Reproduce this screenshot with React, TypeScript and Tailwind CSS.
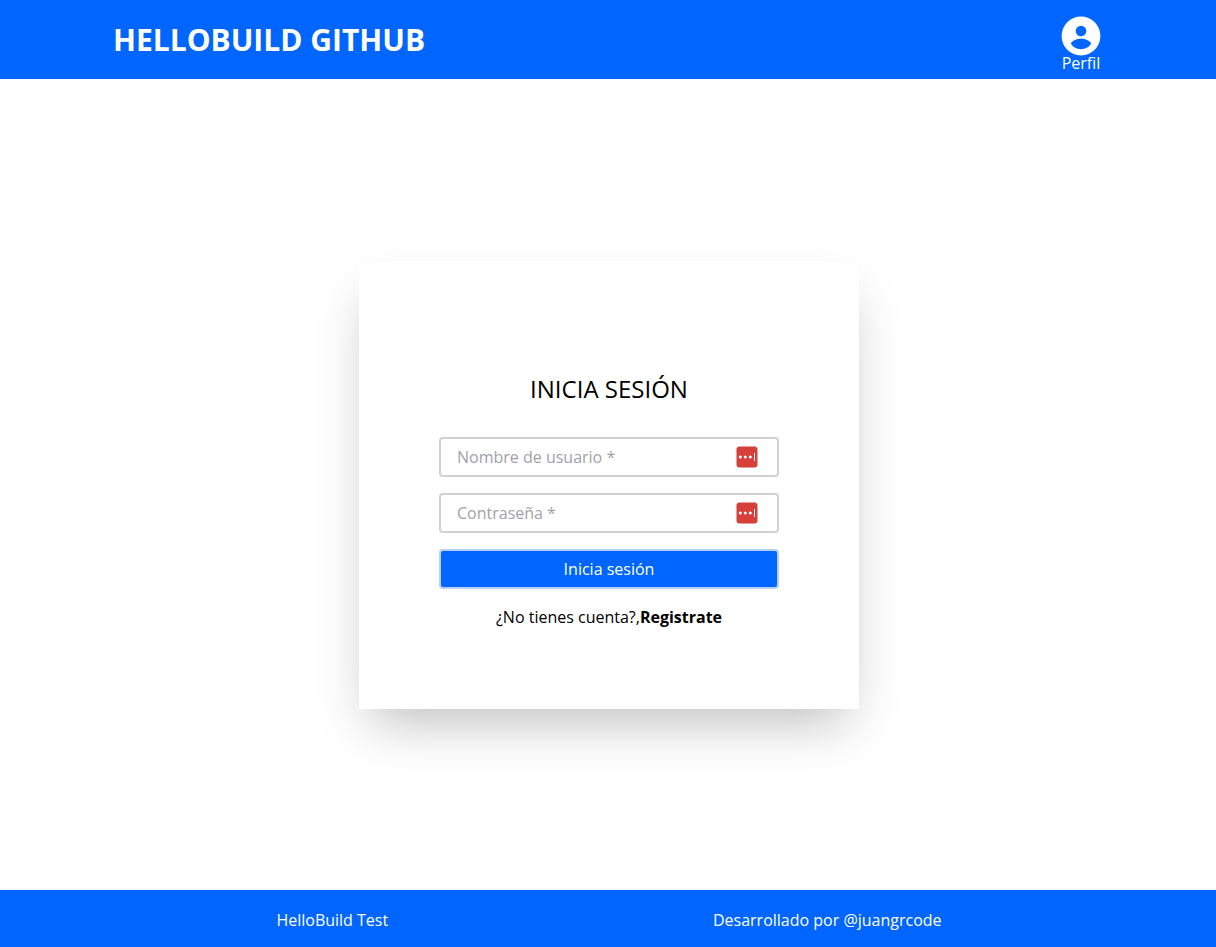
import React from "react";

function ProfileIcon() {
  return (
    <svg aria-hidden="true" viewBox="0 0 40 40" className="size-10 shrink-0">
      <circle cx="20" cy="20" r="19.4" fill="#fff" />
      <circle cx="20" cy="15" r="5.3" fill="#0066ff" />
      <path d="M9.8 27.3C11.5 24.6 15.5 22.8 20 22.8s8.5 1.8 10.2 4.5C28.5 31 24.5 33.2 20 33.2S11.5 31 9.8 27.3Z" fill="#0066ff" />
    </svg>
  );
}

function PasswordManagerBadge() {
  return (
    <svg aria-hidden="true" viewBox="0 0 22 22" className="size-[22px]">
      <rect x="0.5" y="0.5" width="21" height="21" rx="3" fill="#d63f3a" />
      <circle cx="4.3" cy="11" r="1.5" fill="#fff" />
      <circle cx="9.3" cy="11" r="1.5" fill="#fff" />
      <circle cx="14.3" cy="11" r="1.5" fill="#fff" />
      <rect x="18" y="7" width="1" height="8" fill="#fff" />
    </svg>
  );
}

function Field({ label, type, name }: { label: string; type: string; name: string }) {
  return (
    <div className="relative">
      <input
        type={type}
        name={name}
        aria-label={label}
        placeholder={label}
        className="block h-10 w-full rounded border-2 border-[#d1d1d1] bg-white px-4 text-base text-black placeholder:text-[#a1a1aa]"
      />
      <span className="pointer-events-none absolute inset-y-0 right-[21px] flex items-center">
        <PasswordManagerBadge />
      </span>
    </div>
  );
}

export default function App() {
  return (
    <div className="flex min-h-screen flex-col bg-white font-['Open_Sans',sans-serif] text-base text-black">
      <header className="flex items-start justify-between bg-[#0066ff] pr-[115px] pl-[113px] text-white">
        <h1 className="py-[22px] text-3xl leading-[35px] font-bold">HELLOBUILD GITHUB</h1>
        <a href="#perfil" className="flex flex-col items-center pt-4">
          <ProfileIcon />
          <span className="-mt-1 leading-[22px]">Perfil</span>
        </a>
      </header>
      <main className="flex grow items-center justify-center pl-0.5">
        <form className="flex w-[500px] max-w-full flex-col gap-4 bg-white px-20 pt-28 pb-20 shadow-2xl">
          <h2 className="mb-4 text-center text-2xl">INICIA SESIÓN</h2>
          <Field label="Nombre de usuario *" type="text" name="username" />
          <Field label="Contraseña *" type="password" name="password" />
          <button type="submit" className="h-10 rounded border-2 border-[#b9d0f5] bg-[#0066ff] text-white">
            Inicia sesión
          </button>
          <p className="text-center">
            ¿No tienes cuenta?,
            <a href="#registro" className="font-bold">Registrate</a>
          </p>
        </form>
      </main>
      <footer className="flex h-[57px] items-center justify-around bg-[#0066ff] pr-28 pl-[114px] pt-0.5 text-white">
        <p>HelloBuild Test</p>
        <p>Desarrollado por @juangrcode</p>
      </footer>
    </div>
  );
}
